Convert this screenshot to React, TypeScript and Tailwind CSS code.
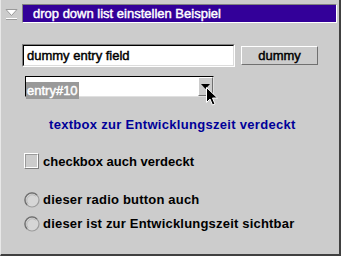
import React from "react";

const font = "font-['Liberation_Sans',Arial,sans-serif]";

function RadioDot() {
  return (
    <svg width="16" height="16" viewBox="0 0 16 16" className="shrink-0">
      <circle cx="8" cy="8" r="7" fill="#d6d6d6" stroke="#9c9c9c" strokeWidth="1.2" />
      <path d="M3 13 A7 7 0 0 1 13 3" fill="none" stroke="#707070" strokeWidth="1.2" />
      <path d="M4.2 11.8 A5.4 5.4 0 0 1 11.8 4.2" fill="none" stroke="#b8b8b8" strokeWidth="1" />
    </svg>
  );
}

export default function App() {
  return (
    <div
      className={`relative w-[341px] h-[256px] overflow-hidden bg-[#cccccc] border-l border-l-[#e8e8e8] border-r-2 border-b-2 border-r-[#404040] border-b-[#404040] text-black ${font}`}
    >
      {/* title row */}
      <div className="flex items-start pt-[4px] pr-[2px]">
        <div className="w-[21px] h-[19px] flex items-center justify-center">
          <svg width="13" height="12" viewBox="0 0 13 12">
            <path d="M1 1.5 H12 L6.5 7.5 Z" fill="#ffffff" stroke="#9a9a9a" strokeWidth="1" />
            <path d="M1 10.5 H12" stroke="#ffffff" strokeWidth="1" />
            <path d="M1 11.5 H12" stroke="#9a9a9a" strokeWidth="1" />
          </svg>
        </div>
        <div className="flex-1 h-[19px] bg-[#330099] border border-t-[#808080] border-l-[#808080] border-b-white border-r-white pl-[10px] text-white text-[13px] leading-[17px] [-webkit-text-stroke:0.45px_white]">
          drop down list einstellen Beispiel
        </div>
      </div>

      {/* entry field + button */}
      <div className="flex items-center mt-[21px] ml-[21px]">
        <div className="w-[213px] h-[23px] border border-t-[#808080] border-l-[#808080] border-b-white border-r-white">
          <div className="h-full bg-white border border-t-black border-l-black border-b-[#dcdcdc] border-r-[#dcdcdc] pl-[3px] text-[13px] leading-[19px] [-webkit-text-stroke:0.45px_black]">
            dummy entry field
          </div>
        </div>
        <div className="ml-[6px] w-[77px] h-[19px] border border-t-white border-l-white border-b-[#707070] border-r-[#707070] bg-[#cccccc] flex items-center justify-center text-[13px] leading-[17px] [-webkit-text-stroke:0.45px_black]">
          dummy
        </div>
      </div>

      {/* drop down */}
      <div className="mt-[9px] ml-[24px] w-[189px] h-[21px] flex border border-t-black border-l-black border-b-[#e0e0e0] border-r-[#e0e0e0] bg-white">
        <div className="flex-1 py-[1px]">
          <span className="inline-block h-[17px] bg-[#999999] text-white px-[1px] text-[13px] leading-[17px] [-webkit-text-stroke:0.45px_white]">
            entry#10
          </span>
        </div>
        <div className="w-[15px] h-full border border-t-white border-l-white border-b-[#707070] border-r-[#707070] bg-[#cccccc] flex items-center justify-center">
          <svg width="9" height="5" viewBox="0 0 9 5">
            <path d="M0 0 H9 L4.5 5 Z" fill="#000000" />
          </svg>
        </div>
      </div>

      {/* blue static text */}
      <div className="mt-[20px] ml-[48px] text-[13px] leading-[15px] font-bold tracking-[0.3px] text-[#000099]">
        textbox zur Entwicklungszeit verdeckt
      </div>

      {/* checkbox */}
      <div className="mt-[21px] ml-[23px] flex items-center h-[16px]">
        <div className="w-[15px] h-[16px] border border-t-white border-l-white border-b-[#808080] border-r-[#808080]">
          <div className="w-full h-full border border-t-[#9a9a9a] border-l-[#9a9a9a] border-b-white border-r-white bg-[#cccccc]" />
        </div>
        <span className="ml-[4px] text-[13px] leading-[15px] font-bold">checkbox auch verdeckt</span>
      </div>

      {/* radios */}
      <div className="mt-[23px] ml-[23px] flex items-center h-[15px]">
        <RadioDot />
        <span className="ml-[3px] text-[13px] leading-[15px] font-bold tracking-[0.2px]">dieser radio button auch</span>
      </div>
      <div className="mt-[9px] ml-[23px] flex items-center h-[15px]">
        <RadioDot />
        <span className="ml-[3px] text-[13px] leading-[15px] font-bold tracking-[0.2px]">
          dieser ist zur Entwicklungszeit sichtbar
        </span>
      </div>

      {/* mouse cursor */}
      <svg
        width="13"
        height="20"
        viewBox="0 0 13 20"
        className="absolute left-[205px] top-[87px]"
      >
        <path
          d="M0.5 0.5 L0.5 15.5 L4 12 L6.5 18 L9 17 L6.5 11 L11.5 11 Z"
          fill="#000000"
          stroke="#ffffff"
          strokeWidth="1"
          strokeLinejoin="miter"
        />
      </svg>
    </div>
  );
}
